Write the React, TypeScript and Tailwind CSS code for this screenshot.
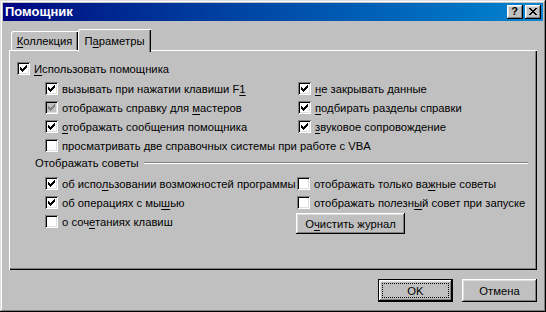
import React from "react";

function Check({ color }: { color: string }) {
  return (
    <svg width="7" height="7" viewBox="0 0 7 7" shapeRendering="crispEdges" className="absolute left-[3px] top-[3px]">
      <rect x="0" y="2" width="1" height="3" fill={color} />
      <rect x="1" y="3" width="1" height="3" fill={color} />
      <rect x="2" y="4" width="1" height="3" fill={color} />
      <rect x="3" y="3" width="1" height="3" fill={color} />
      <rect x="4" y="2" width="1" height="3" fill={color} />
      <rect x="5" y="1" width="1" height="3" fill={color} />
      <rect x="6" y="0" width="1" height="3" fill={color} />
    </svg>
  );
}

function Box({ checked, disabled }: { checked?: boolean; disabled?: boolean }) {
  return (
    <div
      className={
        "relative w-[13px] h-[13px] shrink-0 shadow-[inset_1px_1px_#808080,inset_-1px_-1px_#fff,inset_2px_2px_#000,inset_-2px_-2px_#dfdfdf] " +
        (disabled ? "bg-[#c0c0c0]" : "bg-white")
      }
    >
      {checked && <Check color={disabled ? "#808080" : "#000"} />}
    </div>
  );
}

function Row({
  checked,
  disabled,
  children,
}: {
  checked?: boolean;
  disabled?: boolean;
  children: React.ReactNode;
}) {
  return (
    <div className="h-[19px] flex items-center gap-[4px] whitespace-nowrap">
      <Box checked={checked} disabled={disabled} />
      <span>{children}</span>
    </div>
  );
}

function U({ children }: { children: React.ReactNode }) {
  return <span className="underline underline-offset-[2px]">{children}</span>;
}

const bevel =
  "shadow-[inset_-1px_-1px_#000,inset_1px_1px_#fff,inset_-2px_-2px_#808080,inset_2px_2px_#dfdfdf]";

export default function App() {
  return (
    <div className="w-[546px] h-[312px] bg-[#c0c0c0] p-[3px] flex flex-col text-[11.25px] leading-[14px] text-black font-['Liberation_Sans',Arial,sans-serif] shadow-[inset_-1px_-1px_#000,inset_1px_1px_#dfdfdf,inset_-2px_-2px_#808080,inset_2px_2px_#fff]">
      {/* title bar */}
      <div className="h-[18px] shrink-0 flex items-center justify-between pl-[2px] pr-[2px] bg-gradient-to-r from-[#000080] to-[#1084d0]">
        <span className="text-white font-bold text-[13px]">Помощник</span>
        <div className="flex gap-[2px]">
          <div className={"w-[16px] h-[14px] bg-[#c0c0c0] flex items-center justify-center font-bold text-[11px] leading-none " + bevel}>
            <span className="-mt-[1px] -ml-[1px]">?</span>
          </div>
          <div className={"w-[16px] h-[14px] bg-[#c0c0c0] flex items-center justify-center " + bevel}>
            <svg width="8" height="7" viewBox="0 0 8 7" shapeRendering="crispEdges" className="-mt-[1px] -ml-[1px]">
              <rect x="0" y="0" width="2" height="1" fill="#000" />
              <rect x="6" y="0" width="2" height="1" fill="#000" />
              <rect x="1" y="1" width="2" height="1" fill="#000" />
              <rect x="5" y="1" width="2" height="1" fill="#000" />
              <rect x="2" y="2" width="4" height="1" fill="#000" />
              <rect x="3" y="3" width="2" height="1" fill="#000" />
              <rect x="2" y="4" width="4" height="1" fill="#000" />
              <rect x="1" y="5" width="2" height="1" fill="#000" />
              <rect x="5" y="5" width="2" height="1" fill="#000" />
              <rect x="0" y="6" width="2" height="1" fill="#000" />
              <rect x="6" y="6" width="2" height="1" fill="#000" />
            </svg>
          </div>
        </div>
      </div>

      <div className="px-[6px] pt-[8px] flex flex-col">
        {/* tabs */}
        <div className="h-[21px] flex items-end pl-[2px]">
          <div className="w-[67px] h-[19px] rounded-tl-[2px] shadow-[inset_1px_1px_#fff,inset_-1px_0_#000,inset_-2px_0_#808080] flex items-center justify-center pt-[1px]">
            <span>
              <U>К</U>оллекция
            </span>
          </div>
          <div className="relative z-10 w-[73px] h-[23px] -mb-[2px] bg-[#c0c0c0] rounded-tl-[2px] shadow-[inset_1px_1px_#fff,inset_-1px_0_#000,inset_-2px_0_#808080] flex items-start justify-center pt-[5px]">
            <span>
              П<U>а</U>раметры
            </span>
          </div>
        </div>

        {/* panel */}
        <div className="h-[220px] shadow-[inset_1px_1px_#fff,inset_-1px_-1px_#000,inset_-2px_-2px_#808080] pt-[9px] pl-[8px] pr-[9px] flex flex-col">
          <Row checked>
            <U>И</U>спользовать помощника
          </Row>
          <div className="mt-[1px] pl-[28px] grid grid-cols-[253px_1fr]">
            <Row checked>
              вызывать при нажатии клавиши F<U>1</U>
            </Row>
            <Row checked>
              <U>н</U>е закрывать данные
            </Row>
            <Row checked disabled>
              отображать справку для <U>м</U>астеров
            </Row>
            <Row checked>
              <U>п</U>одбирать разделы справки
            </Row>
            <Row checked>
              <U>о</U>тображать сообщения помощника
            </Row>
            <Row checked>
              <U>з</U>вуковое сопровождение
            </Row>
            <div className="col-span-2">
              <Row>
                просматривать <U>д</U>ве справочных системы при работе с VBA
              </Row>
            </div>
          </div>

          <div className="h-[16px] flex items-center pl-[18px] gap-[5px]">
            <span className="whitespace-nowrap">Отображать советы</span>
            <div className="flex-1 h-[2px] border-t border-[#808080] border-b border-b-white" />
          </div>

          <div className="mt-[3px] pl-[28px] grid grid-cols-[252px_1fr]">
            <Row checked>
              об испо<U>л</U>ьзовании возможностей программы
            </Row>
            <Row>
              отображать только ва<U>ж</U>ные советы
            </Row>
            <Row checked>
              об операциях с мы<U>ш</U>ью
            </Row>
            <Row>
              отображать полезн<U>ы</U>й совет при запуске
            </Row>
            <Row>
              о соч<U>е</U>таниях клавиш
            </Row>
            <div className="pt-[1px]">
              <div className={"-ml-[1px] w-[109px] h-[21px] flex items-center justify-center " + bevel}>
                <span>
                  О<U>ч</U>истить журнал
                </span>
              </div>
            </div>
          </div>
        </div>

        {/* buttons */}
        <div className="mt-[9px] flex justify-end gap-[9px]">
          <div className="w-[75px] h-[23px] border border-black">
            <div className={"w-full h-full p-[3px] " + bevel}>
              <div className="w-full h-full border border-dotted border-black flex items-center justify-center">
                OK
              </div>
            </div>
          </div>
          <div className={"w-[75px] h-[23px] flex items-center justify-center " + bevel}>Отмена</div>
        </div>
      </div>
    </div>
  );
}
